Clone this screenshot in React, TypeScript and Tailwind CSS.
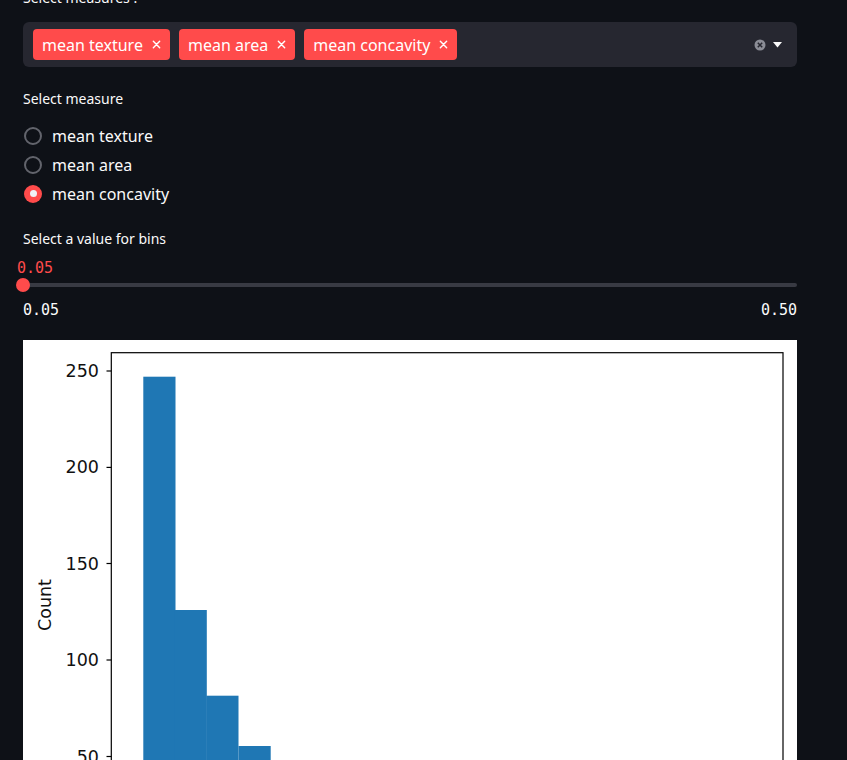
import React from "react";

const sans = { fontFamily: '"Noto Sans", "Open Sans", sans-serif' };
const mono = { fontFamily: '"DejaVu Sans Mono", "Liberation Mono", monospace' };

function Tag({ label }: { label: string }) {
  return (
    <div className="flex h-[31px] items-center rounded-[4px] bg-[#ff4b4b] pl-[9px] pr-[9px] text-[16px] text-white">
      <span className="leading-none">{label}</span>
      <svg width="9" height="9" viewBox="0 0 10 10" className="ml-[9px]">
        <path d="M1.5 1.5 L8.5 8.5 M8.5 1.5 L1.5 8.5" stroke="white" strokeWidth="1.6" strokeLinecap="round" />
      </svg>
    </div>
  );
}

function Radio({ label, checked }: { label: string; checked?: boolean }) {
  return (
    <div className="flex h-[29px] items-center">
      {checked ? (
        <div className="ml-[1px] flex h-[18px] w-[18px] items-center justify-center rounded-full bg-[#ff4b4b]">
          <div className="h-[7px] w-[7px] rounded-full bg-[#f0f2f6]" />
        </div>
      ) : (
        <div className="ml-[1px] h-[18px] w-[18px] rounded-full border-2 border-[#62646c]" />
      )}
      <span className="ml-[10px] text-[16px] text-[#fafafa]">{label}</span>
    </div>
  );
}

function Chart() {
  const ticks = [
    { v: "250", y: 31 },
    { v: "200", y: 127.4 },
    { v: "150", y: 223.5 },
    { v: "100", y: 320 },
    { v: "50", y: 416.5 },
  ];
  const bars = [
    { x: 120.3, top: 36.7 },
    { x: 151.6, top: 270 },
    { x: 183.3, top: 355.7 },
    { x: 215.5, top: 406 },
  ];
  return (
    <div className="bg-white">
      <svg width="774" height="440" viewBox="0 0 774 440" style={{ display: "block" }}>
        {bars.map((b, i) => (
          <rect key={i} x={b.x} y={b.top} width={32.2} height={440 - b.top} fill="#1f77b4" />
        ))}
        <rect x={88.3} y={12.7} width={671.7} height={460} fill="none" stroke="#000" strokeWidth="1.2" />
        {ticks.map((t) => (
          <g key={t.v}>
            <line x1={83.5} x2={88.3} y1={t.y} y2={t.y} stroke="#000" strokeWidth="1.2" />
            <text
              x={76}
              y={t.y}
              textAnchor="end"
              dominantBaseline="central"
              fontSize="17.5"
              fill="#111"
              fontFamily='"DejaVu Sans", sans-serif'
            >
              {t.v}
            </text>
          </g>
        ))}
        <text
          x={22.3}
          y={265}
          transform="rotate(-90 22.3 265)"
          textAnchor="middle"
          dominantBaseline="central"
          fontSize="17.5"
          fill="#111"
          fontFamily='"DejaVu Sans", sans-serif'
        >
          Count
        </text>
      </svg>
    </div>
  );
}

export default function App() {
  return (
    <div className="min-h-screen w-[847px] overflow-hidden bg-[#0e1117] pl-[23px]" style={sans}>
      <div className="w-[774px]">
        <div className="-mt-[12px] h-[20px] text-[14px] leading-[20px] text-[#fafafa]">Select measures :</div>
        <div className="mt-[14px] flex h-[45px] items-center rounded-[6px] bg-[#262730] pl-[10px] pr-[15px]">
          <div className="flex flex-1 items-center gap-[9px]">
            <Tag label="mean texture" />
            <Tag label="mean area" />
            <Tag label="mean concavity" />
          </div>
          <svg width="12" height="12" viewBox="0 0 12 12">
            <circle cx="6" cy="6" r="5.5" fill="#8b8d96" />
            <path d="M3.8 3.8 L8.2 8.2 M8.2 3.8 L3.8 8.2" stroke="#262730" strokeWidth="1.5" />
          </svg>
          <svg width="9" height="6" viewBox="0 0 9 6" className="ml-[7px]">
            <path d="M0 0 H9 L4.5 5.5 Z" fill="#fafafa" />
          </svg>
        </div>

        <div className="mt-[22px] h-[20px] text-[14px] leading-[20px] text-[#fafafa]">Select measure</div>
        <div className="mt-[12px] flex flex-col">
          <Radio label="mean texture" />
          <Radio label="mean area" />
          <Radio label="mean concavity" checked />
        </div>

        <div className="mt-[21px] h-[20px] text-[14px] leading-[20px] text-[#fafafa]">Select a value for bins</div>
        <div className="-ml-[6px] mt-[10px] h-[18px] text-[15px] leading-[18px] text-[#ff4b4b]" style={mono}>
          0.05
        </div>
        <div className="relative mt-[1px] h-[14px]">
          <div className="absolute left-0 right-0 top-[5px] h-[4px] rounded-full bg-[#383a43]" />
          <div className="absolute -left-[7px] top-0 h-[14px] w-[14px] rounded-full bg-[#ff4b4b]" />
        </div>
        <div className="mt-[9px] flex h-[18px] justify-between text-[15px] leading-[18px] text-[#fafafa]" style={mono}>
          <span>0.05</span>
          <span>0.50</span>
        </div>

        <div className="mt-[21px]">
          <Chart />
        </div>
      </div>
    </div>
  );
}
